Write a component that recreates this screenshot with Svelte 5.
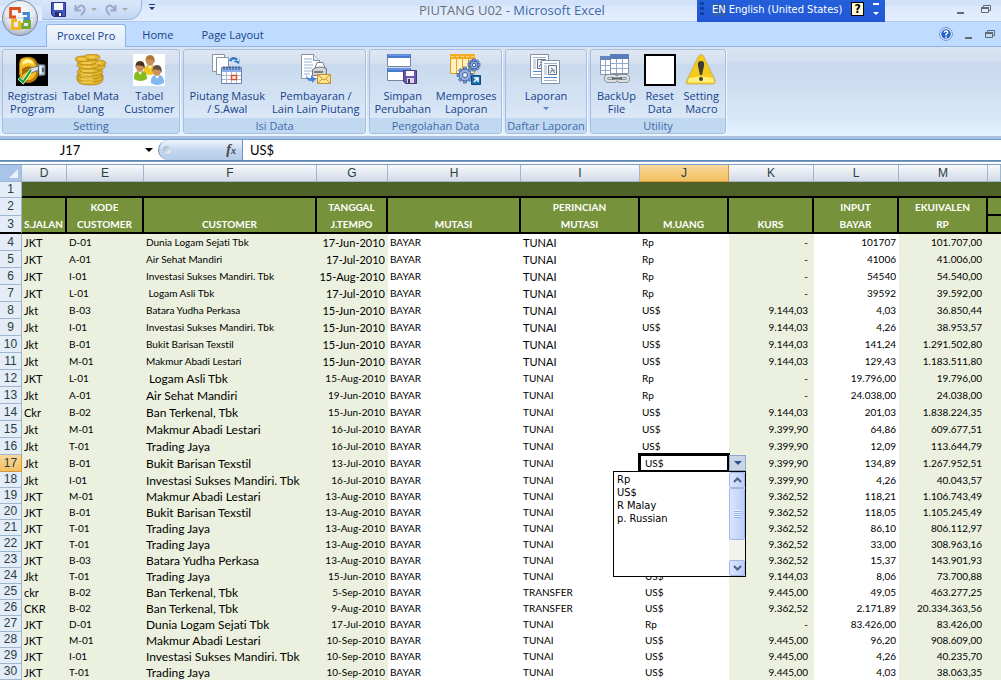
<script lang="ts">
  type Row = [number, string, string, string, string, string, string, string, string, string]

  const columns = ['D', 'E', 'F', 'G', 'H', 'I', 'J', 'K', 'L', 'M', 'N']
  const topLabels = ['', 'KODE', '', 'TANGGAL', '', 'PERINCIAN', '', '', 'INPUT', 'EKUIVALEN', '']
  const bottomLabels = ['S.JALAN', 'CUSTOMER', 'CUSTOMER', 'J.TEMPO', 'MUTASI', 'MUTASI', 'M.UANG', 'KURS', 'BAYAR', 'RP', '']

  // row, s.jalan, kode, customer, jatuh tempo, perincian, mata uang, kurs, input, ekuivalen
  const rows: Row[] = [
    [4, 'JKT', 'D-01', 'Dunia Logam Sejati Tbk', '17-Jun-2010', 'TUNAI', 'Rp', '-', '101707', '101.707,00'],
    [5, 'JKT', 'A-01', 'Air Sehat Mandiri', '17-Jul-2010', 'TUNAI', 'Rp', '-', '41006', '41.006,00'],
    [6, 'JKT', 'I-01', 'Investasi Sukses Mandiri. Tbk', '15-Aug-2010', 'TUNAI', 'Rp', '-', '54540', '54.540,00'],
    [7, 'JKT', 'L-01', '\u00a0Logam Asli Tbk', '17-Jul-2010', 'TUNAI', 'Rp', '-', '39592', '39.592,00'],
    [8, 'Jkt', 'B-03', 'Batara Yudha Perkasa', '15-Jun-2010', 'TUNAI', 'US$', '9.144,03', '4,03', '36.850,44'],
    [9, 'Jkt', 'I-01', 'Investasi Sukses Mandiri. Tbk', '15-Jun-2010', 'TUNAI', 'US$', '9.144,03', '4,26', '38.953,57'],
    [10, 'Jkt', 'B-01', 'Bukit Barisan Texstil', '15-Jun-2010', 'TUNAI', 'US$', '9.144,03', '141,24', '1.291.502,80'],
    [11, 'Jkt', 'M-01', 'Makmur Abadi Lestari', '15-Jun-2010', 'TUNAI', 'US$', '9.144,03', '129,43', '1.183.511,80'],
    [12, 'JKT', 'L-01', '\u00a0Logam Asli Tbk', '15-Aug-2010', 'TUNAI', 'Rp', '-', '19.796,00', '19.796,00'],
    [13, 'Jkt', 'A-01', 'Air Sehat Mandiri', '19-Jun-2010', 'TUNAI', 'Rp', '-', '24.038,00', '24.038,00'],
    [14, 'Ckr', 'B-02', 'Ban Terkenal, Tbk', '15-Jun-2010', 'TUNAI', 'US$', '9.144,03', '201,03', '1.838.224,35'],
    [15, 'Jkt', 'M-01', 'Makmur Abadi Lestari', '16-Jul-2010', 'TUNAI', 'US$', '9.399,90', '64,86', '609.677,51'],
    [16, 'Jkt', 'T-01', 'Trading Jaya', '16-Jul-2010', 'TUNAI', 'US$', '9.399,90', '12,09', '113.644,79'],
    [17, 'Jkt', 'B-01', 'Bukit Barisan Texstil', '13-Jul-2010', 'TUNAI', 'US$', '9.399,90', '134,89', '1.267.952,51'],
    [18, 'Jkt', 'I-01', 'Investasi Sukses Mandiri. Tbk', '16-Jul-2010', 'TUNAI', 'US$', '9.399,90', '4,26', '40.043,57'],
    [19, 'JKT', 'M-01', 'Makmur Abadi Lestari', '13-Aug-2010', 'TUNAI', 'US$', '9.362,52', '118,21', '1.106.743,49'],
    [20, 'JKT', 'B-01', 'Bukit Barisan Texstil', '13-Aug-2010', 'TUNAI', 'US$', '9.362,52', '118,05', '1.105.245,49'],
    [21, 'JKT', 'T-01', 'Trading Jaya', '13-Aug-2010', 'TUNAI', 'US$', '9.362,52', '86,10', '806.112,97'],
    [22, 'JKT', 'T-01', 'Trading Jaya', '13-Aug-2010', 'TUNAI', 'US$', '9.362,52', '33,00', '308.963,16'],
    [23, 'JKT', 'B-03', 'Batara Yudha Perkasa', '13-Aug-2010', 'TUNAI', 'US$', '9.362,52', '15,37', '143.901,93'],
    [24, 'Jkt', 'T-01', 'Trading Jaya', '15-Jun-2010', 'TUNAI', 'US$', '9.144,03', '8,06', '73.700,88'],
    [25, 'ckr', 'B-02', 'Ban Terkenal, Tbk', '5-Sep-2010', 'TRANSFER', 'US$', '9.445,00', '49,05', '463.277,25'],
    [26, 'CKR', 'B-02', 'Ban Terkenal, Tbk', '9-Aug-2010', 'TRANSFER', 'US$', '9.362,52', '2.171,89', '20.334.363,56'],
    [27, 'JKT', 'D-01', 'Dunia Logam Sejati Tbk', '17-Jul-2010', 'TUNAI', 'Rp', '-', '83.426,00', '83.426,00'],
    [28, 'JKT', 'M-01', 'Makmur Abadi Lestari', '10-Sep-2010', 'TUNAI', 'US$', '9.445,00', '96,20', '908.609,00'],
    [29, 'JKT', 'I-01', 'Investasi Sukses Mandiri. Tbk', '10-Sep-2010', 'TUNAI', 'US$', '9.445,00', '4,26', '40.235,70'],
    [30, 'JKT', 'T-01', 'Trading Jaya', '10-Sep-2010', 'TUNAI', 'US$', '9.445,00', '4,03', '38.063,35'],
  ]

  const groups = [
    {
      name: 'Setting',
      cls: 'g-setting',
      items: [
        { icon: 'register', lines: ['Registrasi', 'Program'] },
        { icon: 'coins', lines: ['Tabel Mata', 'Uang'] },
        { icon: 'people', lines: ['Tabel', 'Customer'] },
      ],
    },
    {
      name: 'Isi Data',
      cls: 'g-isi',
      items: [
        { icon: 'calendar', lines: ['Piutang Masuk', '/ S.Awal'] },
        { icon: 'print', lines: ['Pembayaran /', 'Lain Lain Piutang'] },
      ],
    },
    {
      name: 'Pengolahan Data',
      cls: 'g-olah',
      items: [
        { icon: 'save', lines: ['Simpan', 'Perubahan'] },
        { icon: 'process', lines: ['Memproses', 'Laporan'] },
      ],
    },
    {
      name: 'Daftar Laporan',
      cls: 'g-daftar',
      items: [{ icon: 'report', lines: ['Laporan', ''] }],
    },
    {
      name: 'Utility',
      cls: 'g-utility',
      items: [
        { icon: 'backup', lines: ['BackUp', 'File'] },
        { icon: 'reset', lines: ['Reset', 'Data'] },
        { icon: 'warning', lines: ['Setting', 'Macro'] },
      ],
    },
  ]

  const tabs = ['Proxcel Pro', 'Home', 'Page Layout']
  const currencies = ['Rp', 'US$', 'R Malay', 'p. Russian']
  const teeth = [0, 45, 90, 135, 180, 225, 270, 315]
  const activeRow = 17

  let activeTab = $state('Proxcel Pro')
  let picked = $state('US$')
  let choice = $state('')
  let open = $state(true)

  function pick() {
    picked = choice
    open = false
  }
</script>

{#snippet gear(x: number, y: number, r: number)}
  <g transform="translate({x} {y})">
    {#each teeth as a}
      <rect x="-1.5" y={-r - 2} width="3" height="4" fill="#7f9fd6" stroke="#40619f" stroke-width=".7" transform="rotate({a})" />
    {/each}
    <circle r={r} fill="#8fadde" stroke="#40619f" />
    <circle r={r * 0.42} fill="#e8f0fb" stroke="#40619f" />
  </g>
{/snippet}

{#snippet person(x: number, y: number, shirt: string, hair: string)}
  <g transform="translate({x} {y})">
    <path d="M-6 12Q-6.500 4-1 4H2Q7 4 7 12Q0 16-6 12Z" fill={shirt} />
    <path d="M-2 4L0 8L2.500 4Z" fill="#fff" />
    <ellipse cx="0" cy="0" rx="4" ry="5" fill="#c98f5c" />
    <path d="M-4.500 1Q-5-6 0-6Q5.500-6 4.500 2L3-1Q0-1-3-2Z" fill={hair} />
  </g>
{/snippet}

{#snippet windowIcons()}
  <svg width="10" height="12" viewBox="0 0 10 12"><path d="M1 10h7" stroke="#626a72" stroke-width="2" /></svg>
  <svg width="10" height="12" viewBox="0 0 10 12" fill="none" stroke="#626a72">
    <path d="M2.500 4V2.500H9.500V7.500H7.500M.5 4.500H7.500V9.500H.5Z" /><path d="M0 5h8" stroke-width="2" />
  </svg>
{/snippet}

{#snippet icon(name: string)}
  <svg class="icon" width="32" height="32" viewBox="0 0 32 32" aria-hidden="true">
    {#if name === 'register'}
      <rect width="32" height="32" fill="#000" />
      <path d="M6 4Q14 1 19 5L22 10V22Q19 29 12 29Q4 29 3 20V11Q3 6 6 4Z" fill="#b97908" />
      <path d="M5 5Q13 2 18 7L20 12V20Q17 27 11 26Q5 25 4 18V10Q4 7 5 5Z" fill="#f0be25" />
      <path d="M7 7Q12 3 16 7L18 11Q13 7 6 11Z" fill="#fff3a0" />
      <path d="M6 15Q11 11 16 13V18Q10 17 6 22Z" fill="#a76d05" />
      <path d="M14 14L23 12V16L15 19Z" fill="#d6dfe6" stroke="#536270" stroke-width=".8" />
      <path d="M22 10L29 11V21L23 22Z" fill="#aebdca" stroke="#536270" />
      <path d="M24.500 12v8" stroke="#eff6fb" stroke-width="2" />
      <path d="M27 14v4" stroke="#34495c" stroke-width="1.500" />
      <path d="M3 24L7 28L15 16" fill="none" stroke="#fff" stroke-width="3.500" />
      <path d="M3 24L7 28L15 16" fill="none" stroke="#11a334" stroke-width="2.200" />
    {:else if name === 'coins'}
      <g fill="#e3b62a" stroke="#a87a18" stroke-width=".7">
        <path d="M2 25Q2 31 15 31Q28 31 28 25V21H2Z" />
        <ellipse cx="15" cy="24" rx="13" ry="4" />
        <ellipse cx="15" cy="21" rx="12" ry="4" />
        <ellipse cx="15" cy="18" rx="13" ry="4" />
        <ellipse cx="15" cy="15" rx="11" ry="4" />
        <ellipse cx="24" cy="12" rx="6" ry="4" />
        <ellipse cx="24" cy="9" rx="7" ry="3" />
        <ellipse cx="13" cy="11" rx="11" ry="4" />
        <ellipse cx="12" cy="8" rx="10" ry="3" />
        <ellipse cx="8" cy="5" rx="8" ry="3" />
        <ellipse cx="17" cy="3" rx="8" ry="3" />
      </g>
      <path d="M4 5h7M7 9h9M8 13h8M7 17h11M6 21h11M6 25h12M7 28h11M14 3h6M21 9h5" stroke="#f9e27a" />
    {:else if name === 'people'}
      <rect width="32" height="32" fill="#fff" />
      {@render person(17, 7, '#f4c51e', '#b67635')}
      {@render person(7, 13, '#84bd20', '#4c3321')}
      {@render person(24, 17, '#82b8f1', '#685044')}
    {:else if name === 'calendar'}
      <g fill="#fff" stroke="#8594aa">
        <path d="M1.500.5H13.500V17.500H1.500Z" />
        <path d="M5.500 3.500H17.500V20.500H5.500Z" />
      </g>
      <path d="M19 7Q22 2 26 6" fill="none" stroke="#3477cf" stroke-width="2.500" /><path d="M22 7H29V3L28 10Z" fill="#3477cf" />
      <path d="M10.500 13.500H30.500V29.500H10.500Z" fill="#fff" stroke="#667fac" />
      <path d="M11 14H30V18H11Z" fill="#8bb0e9" />
      <path d="M13 12v4M16 12v4M19 12v4M22 12v4M25 12v4M28 12v4" stroke="#30508b" />
      <path d="M11 21.500H30M11 25.500H30M15.500 18V29M20.500 18V29M25.500 18V29" stroke="#a9b8d2" />
      <path d="M20.500 21.500H25.500V25.500H20.500Z" fill="#fff" stroke="#de5029" stroke-width="1.500" />
    {:else if name === 'print'}
      <path d="M1.500.5H13.500L19.500 6.500V24.500H1.500Z" fill="#fff" stroke="#8493aa" />
      <path d="M13.500.5V6.500H19.500" fill="#dbe5f4" stroke="#8493aa" />
      <path d="M4 5h8M4 8h8M4 11h9M4 14h8M4 17h8M4 20h6" stroke="#9bb0d2" />
      <path d="M15 14L17 8.500H23L25 14Z" fill="#fff" stroke="#7a7c82" />
      <path d="M12.500 15.500Q19 11 26.500 14.500V19.500L23 21.500H12.500Z" fill="#d3d5d7" stroke="#727780" />
      <path d="M14 18h9" stroke="#7c828a" stroke-width="2" />
      <path d="M6 20Q7 25 11 24V21L16 25L12 29V27Q6 28 6 20Z" fill="#4c83d8" />
      <path d="M17.500 20.500H30.500V29.500H17.500Z" fill="#ffe48e" stroke="#c59030" />
      <path d="M18 21L24 26L30 21M18 29L22 25M30 29L26 25" fill="none" stroke="#c59030" />
    {:else if name === 'save'}
      <g fill="#fff" stroke="#77869e"><path d="M.5.5H23.500V12.500H.5Z" /><path d="M.5 14.500H23.500V26.500H.5Z" /></g>
      <path d="M0 0H24V4H0ZM0 14H24V18H0Z" fill="#4779cf" />
      <path d="M1 1H23M1 15H23" stroke="#85adf0" />
      <path d="M16.500 16.500H29.500V29.500H18.500L16.500 27.500Z" fill="#6c55a6" stroke="#493779" />
      <path d="M19 17H27V22H19Z" fill="#f8f8fc" /><path d="M20 24H27V29H20Z" fill="#d8d6e8" />
      <path d="M21 25H23V29H21Z" fill="#443172" />
    {:else if name === 'process'}
      <path d="M.5.5H24.500V19.500H.5Z" fill="#fff0bd" stroke="#d89c28" />
      <path d="M0 0H25V5H0Z" fill="#f3ac22" />
      <path d="M6.500 5V19M12.500 5V19M18.500 5V19" stroke="#dda638" />
      <path d="M1 2.500H24" stroke="#ffd877" stroke-dasharray="3 2" />
      {@render gear(24, 11, 4)}
      {@render gear(15, 21, 6)}
      <path d="M21.500 21.500H30.500V30.500H21.500Z" fill="#1d73b4" stroke="#0d4a82" />
      <path d="M24 28L28 24M24 24H28V28" fill="none" stroke="#fff" stroke-width="1.500" />
    {:else if name === 'report'}
      {#each [[0, 0], [11, 6]] as [x, y]}
        <g transform="translate({x} {y})">
          <path d="M.5.5H18.500V23.500H.5Z" fill="#fff" stroke="#8292a9" />
          <path d="M3 3.500h13M3 6h3M3 8h3M3 10h3M3 12h3M3 14h3M3 20.500h13" stroke="#a2b1c6" />
          <path d="M3 17.500h13" stroke="#4a87d4" />
          <path d="M7.500 5.500H15.500V14.500H7.500Z" fill="#edf2f8" stroke="#62738c" />
          <path d="M9 13L11 10L14 13M10 8L14 11" fill="none" stroke="#62738c" />
        </g>
      {/each}
    {:else if name === 'backup'}
      <path d="M.5 2.500H18.500V20.500H.5Z" fill="#fff" stroke="#8493ab" />
      <path d="M0 2H19V6H0Z" fill="#6684bd" />
      <path d="M1 11.500H11M1 16.500H11M5.500 6V20" stroke="#93aad2" />
      <path d="M10.500.5H28.500V19.500H10.500Z" fill="#fff" stroke="#8493ab" />
      <path d="M10 0H29V5H10Z" fill="#5b7cbb" />
      <path d="M11 9.500H28M11 14.500H28M16.500 5V19M22.500 5V19" stroke="#93aad2" />
      <g fill="none" stroke="#737880" stroke-width="4"><rect x="6" y="22" width="10" height="5" rx="2.500" /><rect x="18" y="22" width="10" height="5" rx="2.500" /></g>
      <g fill="none" stroke="#dddfe2" stroke-width="2.500"><rect x="6" y="22" width="10" height="5" rx="2.500" /><rect x="18" y="22" width="10" height="5" rx="2.500" /></g>
      <path d="M12 24.500h10" stroke="#5e646c" stroke-width="2" />
    {:else if name === 'reset'}
      <path d="M.5.5H31.500V31.500H.5Z" fill="#fff" stroke="#000" stroke-width="3" />
    {:else if name === 'warning'}
      <path d="M16 .5Q18 .5 19 3L30 26Q31 30 28 30H3Q0 30 2 26L13 3Q14 .5 16 .5Z" fill="#f3cb1c" stroke="#c9b263" />
      <path d="M4 24Q17 21 28 24L29 28.500H3Z" fill="#fff07c" />
      <path d="M16 7Q20 7 19 12L17 21H15L13 12Q12 7 16 7Z" fill="#3d3d36" />
      <circle cx="16" cy="25" r="2" fill="#3d3d36" />
    {/if}
  </svg>
{/snippet}

<div class="app">
  <header class="chrome">
    <div class="titlebar">
      <div class="quick">
        <button class="tool" aria-label="Save">
          <svg width="15" height="15" viewBox="0 0 15 15">
            <path d="M.5.5H14.500V14.500H2.500L.5 12.500Z" fill="#4257c4" stroke="#26318a" />
            <path d="M3 1H12V8H3Z" fill="#f5f8ff" /><path d="M4 10H11V14H4Z" fill="#26306f" /><path d="M8 11H10V14H8Z" fill="#fff" />
          </svg>
        </button>
        <button class="tool" aria-label="Undo">
          <svg width="23" height="14" viewBox="0 0 23 14" fill="none">
            <path d="M1.500 2V7.500H7M2 7Q6 1 9 3Q13 7 7 12" stroke="#98aac8" stroke-width="2" /><path d="M17 5H23L20 8Z" fill="#a8a9ae" />
          </svg>
        </button>
        <button class="tool" aria-label="Redo">
          <svg width="23" height="14" viewBox="0 0 23 14" fill="none">
            <path d="M10.500 2V7.500H5M10 7Q6 1 3 3Q-1 7 5 12" stroke="#98aac8" stroke-width="2" /><path d="M17 5H23L20 8Z" fill="#a8a9ae" />
          </svg>
        </button>
      </div>
      <button class="tool more" aria-label="Customize Quick Access Toolbar">
        <svg width="6" height="8" viewBox="0 0 6 8" fill="#1d3f77"><path d="M0 0H6V1H0ZM0 3H6L3 6Z" /></svg>
      </button>
      <h1><span>PIUTANG U02</span> - Microsoft Excel</h1>
      <div class="langbar">
        <span class="grip"></span>
        <span class="lang"><b>EN</b> English (United States)</span>
        <button class="ask" aria-label="Help">?</button>
        <button class="tool" aria-label="Options">
          <svg width="6" height="14" viewBox="0 0 6 14" fill="#fff"><path d="M0 1H6V3H0ZM0 10H6L3 13Z" /></svg>
        </button>
      </div>
      <div class="win">{@render windowIcons()}</div>
    </div>

    <nav class="tabs">
      {#each tabs as tab}
        <button class="tab" class:active={tab === activeTab} onclick={() => (activeTab = tab)}>{tab}</button>
      {/each}
      <div class="win low">
        <svg width="14" height="14" viewBox="0 0 14 14">
          <circle cx="7" cy="7" r="6.300" fill="#fff" stroke="#5b86c9" /><circle cx="7" cy="7" r="4.800" fill="#2260cb" />
          <path d="M5 5.500Q5.500 3.800 7 4Q9.200 4.300 8.500 6L7 7.500V8.500M7 9.500V11" fill="none" stroke="#fff" stroke-width="1.500" />
        </svg>
        {@render windowIcons()}
      </div>
    </nav>

    <button class="office" aria-label="Office Button">
      <svg width="38" height="38" viewBox="0 0 38 38">
        <defs>
          <radialGradient id="orb" cx=".5" cy=".35" r=".65"><stop offset="0" stop-color="#fff" /><stop offset=".6" stop-color="#e6e9ef" /><stop offset="1" stop-color="#a7b3c6" /></radialGradient>
        </defs>
        <circle cx="19" cy="18" r="17.500" fill="url(#orb)" stroke="#7488a6" />
        <path d="M2 18H36" stroke="#c6ccd7" />
        <g fill="none" stroke-width="2.800">
          <path d="M15 17H9.500V8.500H18.500V13" stroke="#e0521c" />
          <path d="M21.500 13.500H27.500V18.500H22.500" stroke="#3e8bd1" />
          <path d="M16 20.500H11.500V28.500H18.500V21" stroke="#f2b51d" />
          <path d="M22 21.500H28.500V27.500H21.500V23" stroke="#6faa35" />
        </g>
      </svg>
    </button>

    <div class="ribbon">
      {#each groups as group}
        <section class="group {group.cls}" aria-label={group.name}>
          <div class="items">
            {#each group.items as item}
              <button class="cmd">
                {@render icon(item.icon)}
                <span>{item.lines[0]}</span>
                {#if item.lines[1]}
                  <span>{item.lines[1]}</span>
                {:else}
                  <svg class="caret" width="6" height="3" viewBox="0 0 6 3"><path d="M0 0H6L3 3Z" fill="#5a7fb9" /></svg>
                {/if}
              </button>
            {/each}
          </div>
          <h2>{group.name}</h2>
        </section>
      {/each}
    </div>
  </header>

  <div class="formula">
    <input class="name" aria-label="Name Box" value="J17" />
    <button class="name-drop" aria-label="Cell names">
      <svg width="8" height="4" viewBox="0 0 8 4"><path d="M0 0H8L4 4Z" /></svg>
    </button>
    <div class="pill">
      <span class="knob"></span>
      <button class="fx" aria-label="Insert Function">f<small>x</small></button>
    </div>
    <input class="value" aria-label="Formula" value={picked} />
  </div>

  <table>
    <colgroup>
      <col class="w-num" />
      {#each columns as c}<col class="w-{c}" />{/each}
    </colgroup>
    <thead>
      <tr class="letters">
        <th class="corner" aria-label="Select all">
          <svg width="9" height="9" viewBox="0 0 9 9"><path d="M9 0V9H0Z" fill="#e9f1fb" /></svg>
        </th>
        {#each columns as c}
          <th scope="col" class:hot={c === 'J'}>{c === 'N' ? '' : c}</th>
        {/each}
      </tr>
    </thead>
    <tbody>
      <tr class="banner">
        <th scope="row">1</th>
        <td colspan="11"></td>
      </tr>
      <tr class="labels">
        <th scope="row">2</th>
        {#each topLabels as label}<td>{label}</td>{/each}
      </tr>
      <tr class="labels bottom">
        <th scope="row">3</th>
        {#each bottomLabels as label}<td>{label}</td>{/each}
      </tr>
      {#each rows as [n, jalan, kode, customer, tempo, detail, uang, kurs, input, total]}
        <tr class:short={n > activeRow}>
          <th scope="row" class:hot={n === activeRow}>{n}</th>
          <td class="green mid">{jalan}</td>
          <td class="green">{kode}</td>
          <td class="green" class:big={n > 11}>{customer}</td>
          <td class="green date" class:mid={n < 12}>{tempo}</td>
          <td>BAYAR</td>
          <td class:mid={n < 12}>{detail}</td>
          {#if n === activeRow}
            <td class="uang indent selected">
              {picked}
              <button class="drop" aria-label="Pick currency" onclick={() => (open = !open)}>
                <svg width="8" height="4" viewBox="0 0 8 4"><path d="M0 0H8L4 4Z" fill="#2d4f8e" /></svg>
              </button>
              {#if open}
                <div class="list">
                  <select size="8" aria-label="Mata uang" bind:value={choice} onchange={pick}>
                    {#each currencies as c}<option>{c}</option>{/each}
                  </select>
                  <div class="scroll">
                    <button aria-label="Scroll up"><svg width="9" height="6" viewBox="0 0 9 6"><path d="M1 5L4.500 1.500L8 5" /></svg></button>
                    <div class="thumb"></div>
                    <button aria-label="Scroll down"><svg width="9" height="6" viewBox="0 0 9 6"><path d="M1 1L4.500 4.500L8 1" /></svg></button>
                  </div>
                </div>
              {/if}
            </td>
          {:else}
            <td class="uang" class:indent={n > activeRow}>{uang}</td>
          {/if}
          <td class="green figure">{kurs}</td>
          <td class="figure tight">{input}</td>
          <td class="green figure">{total}</td>
          <td class="green"></td>
        </tr>
      {/each}
    </tbody>
  </table>
</div>

<style>
  :global(body) {
    overflow: hidden;
    background: #fff;
  }

  .app {
    overflow: hidden;
    color: #000;
    font-family: 'Open Sans', 'Noto Sans', sans-serif;
    font-size: 11px;
    font-variant-ligatures: none;
  }

  button,
  input,
  select {
    margin: 0;
    padding: 0;
    border: 0;
    border-radius: 0;
    background: none;
    color: inherit;
    font: inherit;
  }

  svg {
    display: block;
    flex: none;
  }

  .chrome {
    position: relative;
    background: #bfdbff;
    color: #15428b;
  }

  /* title bar */
  .titlebar {
    display: flex;
    height: 21px;
    padding-left: 42px;
    border-bottom: 1px solid #b0cbf1;
    background: linear-gradient(#d3e3fa, #d0e1fa 25%, #dde9fc 30%, #e4eefe);
  }

  .quick {
    display: flex;
    gap: 8px;
    align-items: center;
    height: 19px;
    padding: 0 13px 0 9px;
    border: 1px solid #9ab6df;
    border-width: 0 1px 1px 0;
    border-radius: 0 0 14px 0;
    background: linear-gradient(#dae7fa, #c3d7f4);
  }

  .tool {
    display: flex;
    align-items: center;
  }

  .more {
    height: 16px;
    margin-left: 7px;
  }

  h1 {
    flex: 1;
    margin: 0;
    padding-left: 264px;
    color: #3e6aaa;
    font-size: 13px;
    font-weight: 400;
    line-height: 20px;
    white-space: nowrap;
  }

  h1 span {
    color: #696f7b;
  }

  .langbar {
    display: flex;
    gap: 9px;
    align-items: center;
    box-sizing: border-box;
    width: 188px;
    height: 22px;
    padding: 0 6px 4px 3px;
    background: linear-gradient(#2460da, #2157d7);
    color: #fff;
    font-family: 'DejaVu Sans Condensed', 'DejaVu Sans', sans-serif;
    font-size: 11px;
    white-space: nowrap;
  }

  .grip {
    width: 4px;
    height: 15px;
    margin-right: -5px;
    background: repeating-linear-gradient(#12409f 0 3px, transparent 3px 5px);
  }

  .lang {
    flex: 1;
    padding-left: 4px;
  }

  .lang b {
    background: #2d5fb4;
    font-weight: 400;
  }

  .ask {
    width: 13px;
    height: 14px;
    border: 1px solid #000;
    background: #fffbd0;
    color: #000;
    font-size: 12px;
    font-weight: 700;
    line-height: 12px;
  }

  .win {
    display: flex;
    gap: 15px;
    align-items: center;
    width: 100px;
    justify-content: flex-end;
    padding: 0 10px 4px 0;
    margin-left: 6px;
  }

  .low {
    width: auto;
    gap: 11px;
    margin-left: auto;
    padding: 0 6px 0 0;
  }

  /* tabs */
  .tabs {
    display: flex;
    height: 24px;
    padding-left: 46px;
    border-bottom: 1px solid #8db2e3;
  }

  .tab {
    height: 23px;
    margin-top: 2px;
    padding: 0 14px 2px;
    white-space: nowrap;
  }

  .tab.active {
    margin-right: 2px;
    padding: 0 10px 2px;
    border: 1px solid #8db2e3;
    border-bottom: 0;
    border-radius: 3px 3px 0 0;
    background: linear-gradient(#f2f7fe, #dde9f8);
  }

  .office {
    position: absolute;
    top: 0;
    left: 1px;
  }

  /* ribbon */
  .ribbon {
    display: flex;
    gap: 3px;
    padding: 2px 2px;
    border-bottom: 3px solid #a9c0de;
    background: linear-gradient(#dbe5f2, #d2dff0 16%, #c8d8ed 18%, #d8e7f8 80%, #e3f4ff);
  }

  .group {
    box-sizing: border-box;
    border: 1px solid #a6bfe0;
    border-radius: 3px;
    box-shadow: 1px 1px #eef6ff;
    background: linear-gradient(#dfe7f2, #d4e0ef 16%, #c9d9ed 18%, #d9e7f7 80%);
  }

  .g-setting {
    width: 178px;
  }

  .g-isi {
    width: 183px;
  }

  .g-olah {
    width: 133px;
  }

  .g-daftar {
    width: 82px;
  }

  .g-utility {
    width: 136px;
  }

  .items {
    display: flex;
    height: 68px;
    padding: 0 2px;
  }

  .cmd {
    display: flex;
    flex: 1 1 auto;
    flex-direction: column;
    align-items: center;
    padding-top: 4px;
    line-height: 13px;
    white-space: nowrap;
  }

  .icon {
    margin-bottom: 3px;
  }

  .caret {
    margin-top: 5px;
  }

  h2 {
    margin: 0;
    background: #c1d8f1;
    color: #3e6aaa;
    font-size: 11px;
    font-weight: 400;
    line-height: 15px;
    text-align: center;
    white-space: nowrap;
  }

  /* formula bar */
  .formula {
    display: flex;
    height: 20px;
    border-top: 1px solid #6f9dd9;
    border-bottom: 1px solid #5f8ab8;
    font-family: Lato, sans-serif;
    font-size: 13px;
  }

  .name {
    width: 140px;
    text-align: center;
  }

  .name-drop {
    display: flex;
    align-items: center;
    justify-content: center;
    width: 18px;
  }

  .pill {
    display: flex;
    align-items: center;
    justify-content: space-between;
    box-sizing: border-box;
    width: 85px;
    padding: 0 6px 0 4px;
    border-left: 1px solid #6f8fb8;
    border-right: 1px solid #6f8fb8;
    border-radius: 10px 0 0 10px;
    background: linear-gradient(#f0f6fe, #c4d7f0 50%, #b5cbe8);
  }

  .knob {
    width: 8px;
    height: 8px;
    border-radius: 50%;
    background: linear-gradient(135deg, #9fb0c8, #f4f8fd);
  }

  .fx {
    color: #444;
    font-family: 'Liberation Serif', serif;
    font-size: 14px;
    font-style: italic;
    font-weight: 700;
    line-height: 16px;
  }

  .fx small {
    font-size: 10px;
  }

  .value {
    flex: 1;
    padding-left: 7px;
  }

  /* sheet */
  table {
    width: 100%;
    border-top: 4px double #7d9dc4;
    border-collapse: separate;
    border-spacing: 0;
    table-layout: fixed;
    font-family: Lato, 'Open Sans', sans-serif;
    font-size: 10px;
  }

  .w-num {
    width: 22px;
  }

  .w-D {
    width: 45px;
  }

  .w-E {
    width: 77px;
  }

  .w-F {
    width: 173px;
  }

  .w-G {
    width: 71px;
  }

  .w-H {
    width: 133px;
  }

  .w-I {
    width: 119px;
  }

  .w-J,
  .w-M {
    width: 89px;
  }

  .w-K,
  .w-L {
    width: 85px;
  }

  th,
  td {
    box-sizing: border-box;
    height: 17px;
    padding: 0 2px;
    line-height: 15px;
    text-align: left;
    white-space: nowrap;
  }

  th {
    padding: 0;
    border-right: 1px solid #9eb6ce;
    border-bottom: 1px solid #9eb6ce;
    background: #e4ecf7;
    color: #27413e;
    font-family: 'Liberation Sans', Arial, sans-serif;
    font-size: 12px;
    font-weight: 400;
    text-align: center;
  }

  .short th,
  .short td {
    height: 16px;
  }

  .letters th {
    background: linear-gradient(#f8fafc, #e4e9f1 50%, #d3dbe9);
  }

  .letters .corner {
    background: #a9c4e9;
  }

  .corner svg {
    margin-left: 9px;
  }

  th.hot,
  .letters th.hot {
    border-color: #d99440;
    background: linear-gradient(#f9d99f, #f1c15f);
  }

  .banner th,
  .banner td {
    height: 16px;
  }

  .banner th {
    line-height: 13px;
  }

  .banner td {
    border-bottom: 2px solid #000;
    background: #4f6228;
  }

  .labels th,
  .labels td {
    height: 18px;
  }

  .labels td {
    overflow: hidden;
    padding: 0;
    border-right: 2px solid #000;
    background: #76933c;
    color: #fff;
    font-weight: 700;
    text-align: center;
  }

  .labels td:last-child {
    border-right: 0;
    border-bottom: 2px solid #000;
  }

  .bottom th,
  .bottom td {
    border-bottom: 2px solid #000;
  }

  .green {
    background: #ebf1de;
  }

  .mid {
    font-size: 11px;
  }

  .big {
    font-size: 12px;
  }

  .date {
    padding-right: 3px;
    text-align: right;
  }

  .figure {
    padding-right: 6px;
    text-align: right;
  }

  .tight {
    padding-right: 3px;
  }

  .indent {
    padding-left: 5px;
  }

  .selected {
    position: relative;
  }

  .selected::before {
    content: '';
    position: absolute;
    inset: -2px -1px -1px -2px;
    border: 3px solid #000;
  }

  .drop {
    position: absolute;
    top: 0;
    left: 89px;
    display: flex;
    align-items: center;
    justify-content: center;
    width: 17px;
    height: 16px;
    border: 1px solid #8fa8cf;
    background: #c9d6e6;
  }

  .list {
    position: absolute;
    top: 16px;
    left: -27px;
    z-index: 1;
    display: flex;
    box-sizing: border-box;
    width: 133px;
    height: 106px;
    border: 1px solid #000;
    background: #fff;
  }

  .list select {
    flex: 1;
    overflow: hidden;
    padding: 1px 3px;
    outline: 0;
    font-family: 'DejaVu Sans Condensed', 'DejaVu Sans', sans-serif;
    font-size: 11px;
  }

  .list option {
    min-height: 13px;
    padding: 0;
    line-height: 13px;
  }

  .scroll {
    display: flex;
    flex-direction: column;
    width: 16px;
    background: #f3f3ec;
  }

  .scroll button,
  .thumb {
    display: flex;
    align-items: center;
    justify-content: center;
    box-sizing: border-box;
    height: 16px;
    border: 1px solid #9db6ee;
    border-radius: 2px;
    background: linear-gradient(90deg, #dbe5fd, #bccdf9);
  }

  .scroll svg {
    fill: none;
    stroke: #4d6185;
    stroke-width: 2;
  }

  .thumb {
    height: 52px;
    margin-bottom: auto;
  }

  .thumb::before {
    content: '';
    width: 7px;
    height: 8px;
    background: repeating-linear-gradient(#eef4fe 0 1px, #8cb0f8 1px 2px);
  }
</style>
